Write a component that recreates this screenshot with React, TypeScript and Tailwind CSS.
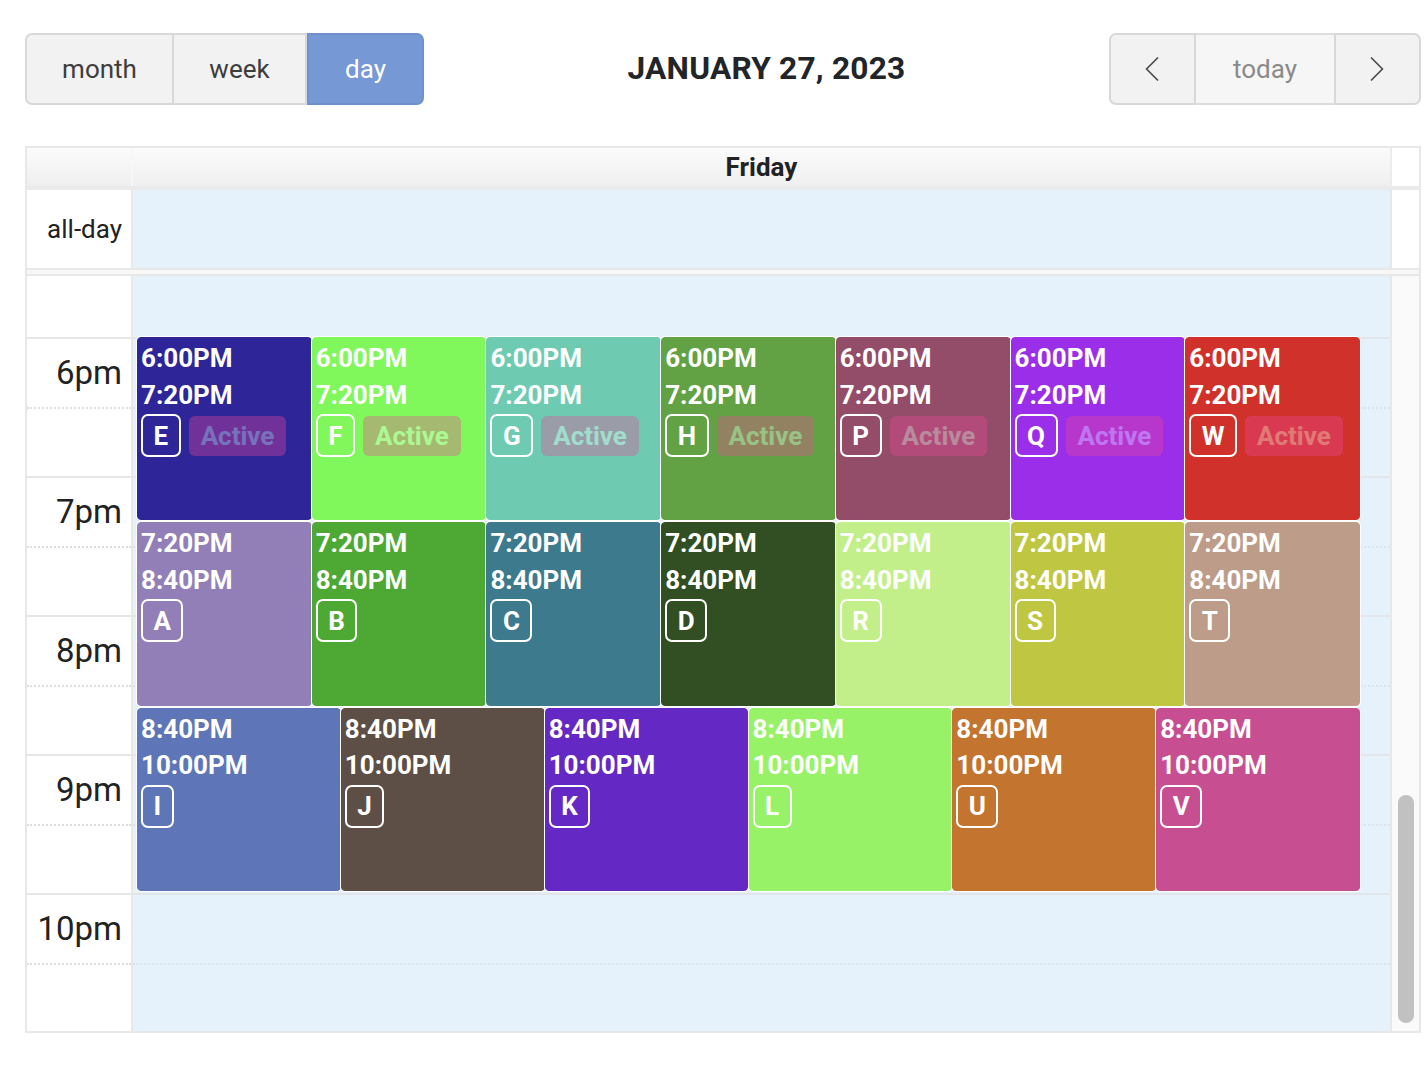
import React from "react";

type CalEvent = {
  letter: string;
  color: string;
  start: number;
  end: number;
  col: number;
  cols: number;
  badge: boolean;
};

const HOUR_PX = 139;
const SIX_PM_OFFSET = 61;
const LANE_LEFT = 4;
const LANE_WIDTH = 1223;

const groups: { start: number; end: number; badge: boolean; items: [string, string][] }[] = [
  {
    start: 18,
    end: 19 + 20 / 60,
    badge: true,
    items: [
      ["E", "#2e2698"],
      ["F", "#80f75a"],
      ["G", "#6ecbb1"],
      ["H", "#63a244"],
      ["P", "#934d69"],
      ["Q", "#9b2ee8"],
      ["W", "#d0322b"],
    ],
  },
  {
    start: 19 + 20 / 60,
    end: 20 + 40 / 60,
    badge: false,
    items: [
      ["A", "#937fb8"],
      ["B", "#4ea834"],
      ["C", "#3e7a8e"],
      ["D", "#324f24"],
      ["R", "#c2ef8a"],
      ["S", "#bfc641"],
      ["T", "#bd9c89"],
    ],
  },
  {
    start: 20 + 40 / 60,
    end: 22,
    badge: false,
    items: [
      ["I", "#5e76b8"],
      ["J", "#5e4f46"],
      ["K", "#6428c4"],
      ["L", "#98f268"],
      ["U", "#c3742f"],
      ["V", "#c74f91"],
    ],
  },
];

const events: CalEvent[] = groups.flatMap((g) =>
  g.items.map(([letter, color], i) => ({
    letter,
    color,
    start: g.start,
    end: g.end,
    col: i,
    cols: g.items.length,
    badge: g.badge,
  }))
);

function fmt(h: number): string {
  const hour = Math.floor(h + 1e-6);
  const min = Math.round((h - hour) * 60);
  const h12 = hour > 12 ? hour - 12 : hour;
  return `${h12}:${min.toString().padStart(2, "0")}PM`;
}

// visible slots of the time grid, starting at 6pm
const slots: { label?: string; minor: boolean; last?: boolean }[] = [
  { label: "6pm", minor: false },
  { minor: true },
  { label: "7pm", minor: false },
  { minor: true },
  { label: "8pm", minor: false },
  { minor: true },
  { label: "9pm", minor: false },
  { minor: true },
  { label: "10pm", minor: false },
  { minor: true, last: true },
];

function EventBlock({ ev }: { ev: CalEvent }) {
  const colW = LANE_WIDTH / ev.cols;
  const style: React.CSSProperties = {
    top: SIX_PM_OFFSET + (ev.start - 18) * HOUR_PX,
    height: (ev.end - ev.start) * HOUR_PX - 2,
    left: LANE_LEFT + ev.col * colW,
    width: colW,
    backgroundColor: ev.color,
    borderColor: ev.color,
  };
  return (
    <div
      className="absolute overflow-hidden rounded-[4px] border shadow-[0_0_0_1px_#ffffff]"
      style={style}
    >
      <div className="pl-[3px] pt-[2px] text-[26px] font-bold leading-[36.5px] text-white">
        <div>{fmt(ev.start)}</div>
        <div>{fmt(ev.end)}</div>
        <div className="mt-[1px] flex items-center gap-[8px]">
          <span className="flex h-[43px] items-center justify-center rounded-[7px] border-2 border-white px-[10.5px] leading-none">
            {ev.letter}
          </span>
          {ev.badge && (
            <span className="flex h-[40px] items-center rounded-[6px] bg-[#ec4899] px-[12px] leading-none opacity-[0.35]">
              Active
            </span>
          )}
        </div>
      </div>
    </div>
  );
}

function Chevron({ dir }: { dir: "left" | "right" }) {
  return (
    <svg width="14" height="24" viewBox="0 0 14 24" fill="none">
      <path
        d={dir === "left" ? "M12.5 1 L1.5 12 L12.5 23" : "M1.5 1 L12.5 12 L1.5 23"}
        stroke="#4a4a4a"
        strokeWidth="1.7"
        strokeLinecap="round"
        strokeLinejoin="round"
      />
    </svg>
  );
}

export default function App() {
  return (
    <div className="min-h-screen bg-white font-[Roboto,'Liberation_Sans',sans-serif] text-[#222]">
      <div className="ml-[25px] w-[1396px] pt-[33px]">
        {/* toolbar */}
        <div className="flex h-[72px] items-center justify-between">
          <div className="flex h-full">
            <button className="h-full w-[149px] rounded-l-[7px] border-2 border-[#d8d8d8] bg-[#f2f2f2] text-[26px] text-[#3d3d3d]">
              month
            </button>
            <button className="h-full w-[133px] border-y-2 border-r-2 border-[#d8d8d8] bg-[#f2f2f2] text-[26px] text-[#3d3d3d]">
              week
            </button>
            <button className="h-full w-[117px] rounded-r-[7px] border-2 border-[#7091cf] bg-[#7698d4] text-[26px] text-white">
              day
            </button>
          </div>
          <h2 className="text-[31.7px] font-bold tracking-[0.2px] text-[#212529]">JANUARY 27, 2023</h2>
          <div className="flex h-full">
            <button className="flex h-full w-[87px] items-center justify-center rounded-l-[7px] border-2 border-[#d8d8d8] bg-[#f2f2f2]">
              <Chevron dir="left" />
            </button>
            <button className="h-full w-[138px] border-y-2 border-[#dddddd] bg-[#f6f6f6] text-[26px] text-[#8a8a8a]">
              today
            </button>
            <button className="flex h-full w-[87px] items-center justify-center rounded-r-[7px] border-2 border-[#d8d8d8] bg-[#f2f2f2]">
              <Chevron dir="right" />
            </button>
          </div>
        </div>

        {/* calendar */}
        <div className="mt-[41px] border-2 border-[#e8e8e8]">
          {/* column header */}
          <div className="flex h-[42px] border-b-4 border-[#eaeaea]">
            <div className="w-[106px] border-r-2 border-[#f7f7f7] bg-gradient-to-b from-[#fbfbfb] to-[#efefef]" />
            <div className="flex flex-1 items-center justify-center border-r-2 border-[#ececec] bg-gradient-to-b from-[#fbfbfb] to-[#efefef] text-[26px] font-bold text-[#222]">
              Friday
            </div>
            <div className="w-[27px] bg-white" />
          </div>

          {/* all-day row */}
          <div className="flex h-[78px]">
            <div className="flex w-[106px] items-center justify-end border-r-2 border-[#e8e8e8] bg-white pr-[9px] text-[26px] text-[#222]">
              all-day
            </div>
            <div className="flex-1 border-r-2 border-[#e8e8e8] bg-[#e5f1fb]" />
            <div className="w-[27px] bg-white" />
          </div>

          {/* divider */}
          <div className="h-[8px] border-y-2 border-[#e8e8e8] bg-[#f7f7f7]" />

          {/* time grid */}
          <div className="flex">
            <div className="w-[106px] border-r-2 border-[#e8e8e8] bg-white">
              <div className="h-[61px]" />
              {slots.map((s, i) => (
                <div
                  key={i}
                  className={`flex items-center justify-end pr-[9px] text-[33px] text-[#222] ${
                    s.last ? "h-[68px]" : "h-[69.5px]"
                  } ${s.minor ? "border-t-2 border-dotted border-[#dedede]" : "border-t-2 border-solid border-[#e6e6e6]"}`}
                >
                  {s.label}
                </div>
              ))}
            </div>
            <div className="relative flex-1 border-r-2 border-[#e8e8e8] bg-[#e5f1fb]">
              <div className="h-[61px]" />
              {slots.map((s, i) => (
                <div
                  key={i}
                  className={`${s.last ? "h-[68px]" : "h-[69.5px]"} ${
                    s.minor ? "border-t-2 border-dotted border-[#dde3e8]" : "border-t-2 border-solid border-[#e2e6ea]"
                  }`}
                />
              ))}
              <div className="absolute inset-0">
                {events.map((ev) => (
                  <EventBlock key={ev.letter} ev={ev} />
                ))}
              </div>
            </div>
            <div className="w-[27px] bg-[#fafafa]">
              <div className="ml-[6px] mt-[519px] h-[228px] w-[16px] rounded-full bg-[#c1c1c1]" />
            </div>
          </div>
        </div>
      </div>
    </div>
  );
}
